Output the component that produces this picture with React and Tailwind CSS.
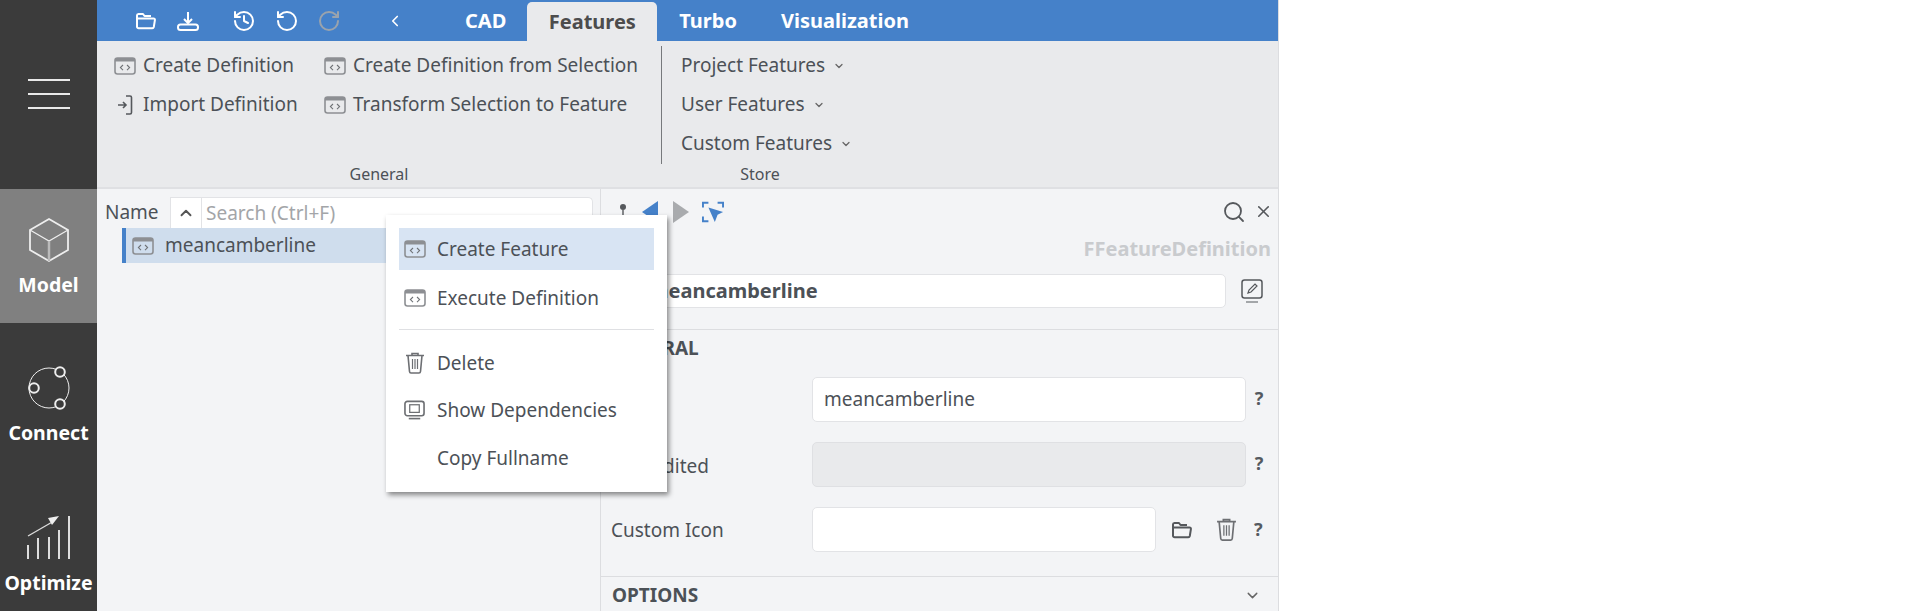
import { ChevronDown, ChevronLeft, ChevronUp, History, RotateCcw, RotateCw, Search, X } from "lucide-react";

const DefIcon = ({ className = "" }) => (
  <svg viewBox="0 0 22 18" width="22" height="18" fill="none" className={"shrink-0 " + className}>
    <rect x="1" y="1" width="20" height="16" rx="2.5" stroke="#8d8f93" strokeWidth="1.6" />
    <rect x="1" y="1" width="20" height="3.5" fill="#8d8f93" />
    <path d="M9 8l-2.6 2.6L9 13.2M13 8l2.6 2.6L13 13.2" stroke="#6f7276" strokeWidth="1.1" />
  </svg>
);

const FolderIcon = ({ color = "#fff", size = 22 }) => (
  <svg viewBox="0 0 22 18" width={size} height={(size * 18) / 22} fill="none" stroke={color} strokeWidth="2" strokeLinejoin="round">
    <path d="M2 15V3.5C2 2.5 2.6 2 3.4 2H8l1.5 2H16" />
    <path d="M2 6.5h16.5c1 0 1.6.7 1.4 1.6L18.8 15c-.2.8-.7 1.2-1.5 1.2H3.6C2.700 16.200 2 15.600 2 14.800z" />
  </svg>
);

const TrashIcon = ({ size = 20 }) => (
  <svg viewBox="0 0 20 22" width={size} height={(size * 22) / 20} fill="none" stroke="#6d6f73" strokeWidth="1.6">
    <path d="M1 3.500h18M7 3.500V1.500h6v2M3 3.500l1.500 16c.1 1 .6 1.500 1.500 1.500h8c.9 0 1.400-.5 1.500-1.500l1.500-16" />
    <path d="M7.500 7v10M10 7v10M12.500 7v10" strokeWidth="1.200" />
  </svg>
);

const HelpMark = () => <span className="w-[26px] -translate-y-px text-center text-[18px] font-bold text-[#555a60]">?</span>;

const RibbonItem = ({ icon, label }) => (
  <div className="flex h-[39px] items-center gap-[7px]">
    <span className="flex w-[22px] justify-center">{icon}</span>
    <span className="whitespace-nowrap">{label}</span>
  </div>
);

const StoreItem = ({ label }) => (
  <div className="flex h-[39px] items-center gap-[8px]">
    <span className="whitespace-nowrap">{label}</span>
    <ChevronDown size={12} strokeWidth={2.5} className="text-[#666]" />
  </div>
);

const NavItem = ({ icon, label, active, className = "" }) => (
  <div className={"flex flex-col items-center text-[19.500px] font-bold text-white " + (active ? "bg-[#808080] " : "") + className}>
    {icon}
    <span className="leading-[24px]">{label}</span>
  </div>
);

const MenuItem = ({ icon, label, active, className = "" }) => (
  <div className={"flex h-[42px] items-center gap-[12px] pl-[5px] " + (active ? "bg-[#d8e4f3] " : "") + className}>
    <span className="flex w-[21px] justify-center">{icon}</span>
    <span className="whitespace-nowrap">{label}</span>
  </div>
);

export default function App() {
  return (
    <div className="relative flex h-[611px] w-[1920px] overflow-hidden bg-white font-['Noto_Sans',sans-serif] text-[19px] text-[#4c5157]">
      {/* left nav */}
      <div className="flex w-[97px] shrink-0 flex-col bg-[#3b3b3b]">
        <div className="flex h-[189px] flex-col items-center gap-[12px] pt-[79px]">
          <div className="h-[2px] w-[42px] bg-[#e8e8e8]" />
          <div className="h-[2px] w-[42px] bg-[#e8e8e8]" />
          <div className="h-[2px] w-[42px] bg-[#e8e8e8]" />
        </div>
        <NavItem
          active
          className="h-[134px] pt-[28px]"
          label="Model"
          icon={
            <svg viewBox="0 0 42 46" width="42" height="46" fill="none" stroke="#eee" strokeWidth="1.800" className="mb-[10px]">
              <path d="M21 2l19 11v20L21 44 2 33V13z" />
              <path d="M2 13l19 11 19-11" strokeWidth="1.200" />
              <path d="M21 24v20" stroke="#bbb" strokeWidth="2.500" />
            </svg>
          }
        />
        <NavItem
          className="h-[122px] pt-[43px]"
          label="Connect"
          icon={
            <svg viewBox="0 0 44 44" width="44" height="44" fill="none" stroke="#eee" strokeWidth="1.500" className="mb-[11px]">
              <circle cx="22" cy="22" r="20" strokeWidth="1" />
              <circle cx="33" cy="6" r="4.800" fill="#3b3b3b" strokeWidth="2" />
              <circle cx="7" cy="22" r="4.800" fill="#3b3b3b" strokeWidth="2" />
              <circle cx="33" cy="38" r="4.800" fill="#3b3b3b" strokeWidth="2" />
            </svg>
          }
        />
        <NavItem
          className="flex-1 pt-[70px]"
          label="Optimize"
          icon={
            <svg viewBox="0 0 46 46" width="46" height="46" fill="none" stroke="#ddd" strokeWidth="2" className="mb-[10px]">
              <path d="M2 44V30M12 44V23M23 44V22M33 44V15M43 44V1" />
              <path d="M2 21L28 6" strokeWidth="1.300" />
              <path d="M33 1L22 3l4 7z" fill="#eee" stroke="none" />
            </svg>
          }
        />
      </div>

      <div className="flex w-[1182px] shrink-0 flex-col border-r border-[#dcdde0]">
        {/* top bar */}
        <div className="flex h-[41px] shrink-0 items-end bg-[#4581c9] pl-[38px] text-white">
          <div className="flex h-[41px] items-center">
            <FolderIcon />
            <svg viewBox="0 0 22 20" width="22" height="20" fill="none" stroke="#fff" strokeWidth="2" className="ml-[20px]">
              <path d="M11 1v10M7 8l4 4 4-4" />
              <rect x="1" y="13.500" width="20" height="5.500" rx="2.500" />
            </svg>
            <History size={24} strokeWidth={2} className="ml-[33px]" />
            <RotateCcw size={24} strokeWidth={2} className="ml-[19px]" />
            <RotateCw size={24} strokeWidth={2} className="ml-[18px] text-[#9aa3ad]" />
            <ChevronLeft size={18} strokeWidth={2.200} className="ml-[45px]" />
          </div>
          <div className="ml-[61px] flex h-[41px] items-center text-[20px] font-bold">
            <span>CAD</span>
            <span className="ml-[21px] flex h-[39px] w-[130px] items-center justify-center self-end rounded-t-[5px] bg-[#e9eaec] text-[#4c4c4c]">Features</span>
            <span className="ml-[22px]">Turbo</span>
            <span className="ml-[44px]">Visualization</span>
          </div>
        </div>

        {/* ribbon */}
        <div className="flex h-[148px] shrink-0 border-b-[2px] border-[#dfe0e3] bg-[#e9eaec]">
          <div className="flex w-[564px] flex-col justify-between pb-[3px] pt-[5px]">
            <div className="grid grid-cols-[210px_1fr] pl-[17px]">
              <RibbonItem icon={<DefIcon />} label="Create Definition" />
              <RibbonItem icon={<DefIcon />} label="Create Definition from Selection" />
              <RibbonItem
                icon={
                  <svg viewBox="0 0 18 20" width="18" height="20" fill="none" stroke="#55585c" strokeWidth="1.600">
                    <path d="M10 1h4c1 0 1.500.5 1.500 1.500v15c0 1-.5 1.500-1.500 1.500h-4" />
                    <path d="M2 10h8M7 7l3 3-3 3" />
                  </svg>
                }
                label="Import Definition"
              />
              <RibbonItem icon={<DefIcon />} label="Transform Selection to Feature" />
            </div>
            <div className="text-center text-[16px] leading-[20px]">General</div>
          </div>
          <div className="flex w-[198px] flex-col justify-between pb-[3px] pt-[5px]">
            <div className="h-[120px] border-l-[1.500px] border-[#77797c] pl-[19px]">
              <StoreItem label="Project Features" />
              <StoreItem label="User Features" />
              <StoreItem label="Custom Features" />
            </div>
            <div className="text-center text-[16px] leading-[20px]">Store</div>
          </div>
        </div>

        <div className="flex min-h-0 flex-1 bg-[#f3f4f6]">
          {/* tree panel */}
          <div className="w-[504px] shrink-0 border-r border-[#dcdde0]">
            <div className="flex h-[39px] items-end pl-[8px]">
              <div className="flex h-[31px] w-[65px] items-center">Name</div>
              <div className="flex h-[31px] w-[31px] items-center justify-center border-l border-t border-[#e2e3e6] bg-white">
                <ChevronUp size={18} strokeWidth={2.500} className="text-[#555]" />
              </div>
              <div className="flex h-[31px] w-[392px] items-center rounded-tr-[5px] border border-b-0 border-[#e2e3e6] bg-white pl-[4px] text-[#a3a5a8]">Search (Ctrl+F)</div>
            </div>
            <div className="ml-[25px] mr-[8px] flex h-[35px] items-center gap-[11px] border-l-[4px] border-[#4581c9] bg-[#cfdded] pl-[6px]">
              <DefIcon />
              <span>meancamberline</span>
            </div>
          </div>

          {/* properties panel */}
          <div className="flex flex-1 flex-col">
            <div className="flex h-[45px] shrink-0 items-center pl-[18px] pr-[5px]">
              <svg viewBox="0 0 8 20" width="8" height="20" className="mr-[15px]">
                <circle cx="4" cy="5" r="3" fill="#55585c" />
                <path d="M4 8v10" stroke="#55585c" strokeWidth="1.400" />
              </svg>
              <svg viewBox="0 0 16 22" width="16" height="22" className="mr-[15px]"><path d="M16 0v22L0 11z" fill="#4581c9" /></svg>
              <svg viewBox="0 0 16 22" width="16" height="22" className="mr-[13px]"><path d="M0 0v22l16-11z" fill="#a9abae" /></svg>
              <svg viewBox="0 0 24 24" width="22" height="24" fill="none" stroke="#4581c9" strokeWidth="2.200">
                <path d="M1 7V2h6M17 2h6v5M1 17v5h6" />
                <path d="M7 7l16 5-6 3-3 8z" fill="#4581c9" stroke="none" />
              </svg>
              <Search size={24} strokeWidth={1.800} className="ml-auto text-[#55585c]" />
              <X size={19} strokeWidth={2} className="ml-[8px] text-[#55585c]" />
            </div>
            <div className="pr-[7px] text-right text-[20px] font-bold leading-[30px] text-[#c9cbce]">FFeatureDefinition</div>
            <div className="mt-[10px] flex items-center">
              <div className="ml-[11px] flex h-[34px] w-[614px] items-center rounded-[5px] border border-[#e2e3e6] bg-white pl-[36px] text-[20px] font-bold">meancamberline</div>
              <svg viewBox="0 0 22 24" width="22" height="24" fill="none" stroke="#55585c" strokeWidth="1.500" className="ml-[15px]">
                <rect x="1" y="1" width="20" height="18" rx="2.500" />
                <path d="M5 23h12M7 14l1-3 6-6 2 2-6 6z" strokeWidth="1.200" />
              </svg>
            </div>
            <div className="mt-[21px] border-t-[1.500px] border-[#dcdde0] pl-[11px] font-bold leading-[36px]">GENERAL</div>
            <div className="mt-[11px] grid grid-cols-[199px_1fr] items-center gap-y-[20px] pl-[10px] pr-[6px]">
              <span>Name</span>
              <div className="flex items-center pl-[2px]">
                <div className="flex h-[45px] w-[434px] items-center rounded-[5px] border border-[#e2e3e6] bg-white pl-[11px]">meancamberline</div>
                <HelpMark />
              </div>
              <span className="translate-y-[2px]">Last Edited</span>
              <div className="flex items-center pl-[2px]">
                <div className="h-[45px] w-[434px] rounded-[5px] border border-[#dfe0e3] bg-[#e9eaec]" />
                <HelpMark />
              </div>
              <span className="translate-y-px">Custom Icon</span>
              <div className="flex items-center pl-[2px]">
                <div className="h-[45px] w-[344px] rounded-[5px] border border-[#e2e3e6] bg-white" />
                <span className="ml-[15px]"><FolderIcon color="#55585c" /></span>
                <span className="ml-[23px]"><TrashIcon size={21} /></span>
                <span className="ml-[17px]"><HelpMark /></span>
              </div>
            </div>
            <div className="mt-[24px] flex items-center justify-between border-t-[1.500px] border-[#dcdde0] pl-[11px] pr-[17px] pt-[3px] font-bold leading-[30px]">
              <span>OPTIONS</span>
              <ChevronDown size={17} strokeWidth={2} className="text-[#666]" />
            </div>
          </div>
        </div>
      </div>

      {/* context menu */}
      <div className="absolute left-[386px] top-[215px] h-[277px] w-[281px] bg-white p-[13px] shadow-[2px_3px_5px_rgba(0,0,0,0.45)]">
        <MenuItem active icon={<DefIcon />} label="Create Feature" />
        <MenuItem className="mt-[7px]" icon={<DefIcon />} label="Execute Definition" />
        <div className="mt-[10px] h-px bg-[#dfe0e3]" />
        <MenuItem className="mt-[12px]" icon={<TrashIcon />} label="Delete" />
        <MenuItem className="mt-[5px]" icon={
            <svg viewBox="0 0 22 20" width="22" height="20" fill="none" stroke="#6d6f73" strokeWidth="1.700">
              <rect x="1" y="1" width="20" height="15" rx="2.500" />
              <rect x="6" y="4.500" width="10" height="8" strokeWidth="1.300" />
              <path d="M5 19h12" />
            </svg>
          }
          label="Show Dependencies"
        />
        <MenuItem className="mt-[6px]" label="Copy Fullname" />
      </div>
    </div>
  );
}
